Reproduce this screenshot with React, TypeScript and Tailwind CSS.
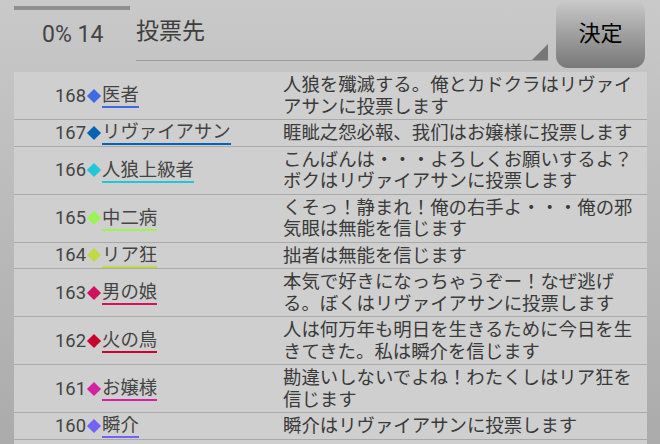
import React from 'react';

const rows = [
    { no: 168, name: "医者", color: "#4169e1", msg: "人狼を殲滅する。俺とカドクラはリヴァイアサンに投票します" },
    { no: 167, name: "リヴァイアサン", color: "#0862b4", msg: "睚眦之怨必報、我们はお嬢様に投票します" },
    { no: 166, name: "人狼上級者", color: "#22c6da", msg: "こんばんは・・・よろしくお願いするよ？ボクはリヴァイアサンに投票します" },
    { no: 165, name: "中二病", color: "#9cf452", msg: "くそっ！静まれ！俺の右手よ・・・俺の邪気眼は無能を信じます" },
    { no: 164, name: "リア狂", color: "#c2d844", msg: "拙者は無能を信じます" },
    { no: 163, name: "男の娘", color: "#d0125c", msg: "本気で好きになっちゃうぞー！なぜ逃げる。ぼくはリヴァイアサンに投票します" },
    { no: 162, name: "火の鳥", color: "#c8032e", msg: "人は何万年も明日を生きるために今日を生きてきた。私は瞬介を信じます" },
    { no: 161, name: "お嬢様", color: "#d222a2", msg: "勘違いしないでよね！わたくしはリア狂を信じます" },
    { no: 160, name: "瞬介", color: "#7262f8", msg: "瞬介はリヴァイアサンに投票します" },
];

const font = { fontFamily: "Roboto, 'Noto Sans CJK JP', sans-serif" };

export default function App() {
    return (
        <div
            style={font}
            className="w-[660px] h-[444px] overflow-hidden bg-gradient-to-b from-[#c9c9c9] to-[#ababab] flex flex-col"
        >
            {/* header */}
            <div className="flex h-[72px] shrink-0 pl-[14px] pr-[15px]">
                <div className="w-[116px] flex flex-col">
                    <div className="mt-[6px] h-[4px] bg-[#8e8e8e]" />
                    <div className="mt-[11px] pl-[28px] text-[23px] leading-[28px] text-[#444]">0% 14</div>
                </div>
                <div className="relative ml-[6px] w-[412px] h-[61px] border-b-[1.5px] border-[#9c9c9c]">
                    <div className="pt-[18px] text-[23px] leading-[28px] text-[#3e3e3e]">投票先</div>
                    <div className="absolute right-0 bottom-0 w-0 h-0 border-l-[16px] border-l-transparent border-b-[16px] border-b-[#777]" />
                </div>
                <button className="ml-[8px] w-[89px] h-[68px] rounded-[12px] bg-gradient-to-b from-[#cacaca] to-[#787878] text-[22px] text-black flex items-center justify-center pb-[2px]">
                    決定
                </button>
            </div>

            {/* list */}
            <div className="mx-[14px] mr-[13px] flex-1 bg-[#cfcfcf]">
                {rows.map((r) => (
                    <div key={r.no} className="grid grid-cols-[269px_1fr] border-b-[1.5px] border-[#a9a9a9]">
                        <div className="flex items-center pl-[41px] text-[18.4px] leading-[22px] text-[#444]">
                            <span>{r.no}</span>
                            <span
                                className="inline-block w-[10px] h-[10px] rotate-45 ml-[3px] mr-[3px]"
                                style={{ backgroundColor: r.color }}
                            />
                            <span className="border-b-2 pt-[1px]" style={{ borderColor: r.color }}>{r.name}</span>
                        </div>
                        <div className="py-[2px] pr-[6px] text-[18.4px] leading-[21.5px] text-[#3a3a3a]">
                            {r.msg}
                        </div>
                    </div>
                ))}
            </div>
        </div>
    );
}
